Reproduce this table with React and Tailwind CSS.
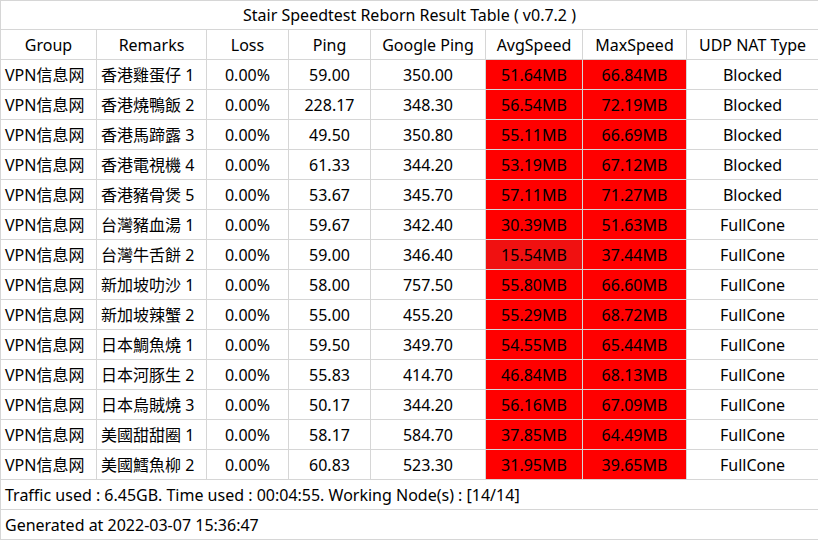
import React from 'react';

const rows = [
  ['VPN信息网', '香港雞蛋仔 1', '0.00%', '59.00', '350.00', '51.64MB', '66.84MB', 'Blocked'],
  ['VPN信息网', '香港燒鴨飯 2', '0.00%', '228.17', '348.30', '56.54MB', '72.19MB', 'Blocked'],
  ['VPN信息网', '香港馬蹄露 3', '0.00%', '49.50', '350.80', '55.11MB', '66.69MB', 'Blocked'],
  ['VPN信息网', '香港電視機 4', '0.00%', '61.33', '344.20', '53.19MB', '67.12MB', 'Blocked'],
  ['VPN信息网', '香港豬骨煲 5', '0.00%', '53.67', '345.70', '57.11MB', '71.27MB', 'Blocked'],
  ['VPN信息网', '台灣豬血湯 1', '0.00%', '59.67', '342.40', '30.39MB', '51.63MB', 'FullCone'],
  ['VPN信息网', '台灣牛舌餅 2', '0.00%', '59.00', '346.40', '15.54MB', '37.44MB', 'FullCone'],
  ['VPN信息网', '新加坡叻沙 1', '0.00%', '58.00', '757.50', '55.80MB', '66.60MB', 'FullCone'],
  ['VPN信息网', '新加坡辣蟹 2', '0.00%', '55.00', '455.20', '55.29MB', '68.72MB', 'FullCone'],
  ['VPN信息网', '日本鯛魚燒 1', '0.00%', '59.50', '349.70', '54.55MB', '65.44MB', 'FullCone'],
  ['VPN信息网', '日本河豚生 2', '0.00%', '55.83', '414.70', '46.84MB', '68.13MB', 'FullCone'],
  ['VPN信息网', '日本烏賊燒 3', '0.00%', '50.17', '344.20', '56.16MB', '67.09MB', 'FullCone'],
  ['VPN信息网', '美國甜甜圈 1', '0.00%', '58.17', '584.70', '37.85MB', '64.49MB', 'FullCone'],
  ['VPN信息网', '美國鱈魚柳 2', '0.00%', '60.83', '523.30', '31.95MB', '39.65MB', 'FullCone'],
];

const headers = ['Group', 'Remarks', 'Loss', 'Ping', 'Google Ping', 'AvgSpeed', 'MaxSpeed', 'UDP NAT Type'];
const widths = ['w-[96px]', 'w-[110px]', 'w-[82px]', 'w-[82px]', 'w-[115px]', 'w-[97px]', 'w-[104px]', 'w-[132px]'];

const cell = 'border border-[#d6d6d6] p-0 whitespace-nowrap';

const App = () => {
  return (
    <div className="bg-white text-black text-[16px] leading-none" style={{ fontFamily: '"Noto Sans", "Noto Sans CJK SC", sans-serif' }}>
      <table className="w-[818px] table-fixed border-collapse">
        <colgroup>
          {widths.map((w, i) => (
            <col key={i} className={w} />
          ))}
        </colgroup>
        <tbody>
          <tr className="h-[29px]">
            <td colSpan={8} className={`${cell} text-center`}>
              Stair Speedtest Reborn Result Table ( v0.7.2 )
            </td>
          </tr>
          <tr className="h-[30px]">
            {headers.map((h) => (
              <td key={h} className={`${cell} text-center`}>{h}</td>
            ))}
          </tr>
          {rows.map((r, i) => (
            <tr key={i} className="h-[30px]">
              {r.map((v, j) => {
                let cls = 'text-center';
                if (j < 2) cls = 'text-left pl-[4px]';
                if (j === 5 || j === 6) {
                  cls += v === '15.54MB' ? ' bg-[#f01111]' : ' bg-[#ff0000]';
                }
                return (
                  <td key={j} className={`${cell} ${cls}`}>{v}</td>
                );
              })}
            </tr>
          ))}
          <tr className="h-[30px]">
            <td colSpan={8} className={`${cell} text-left pl-[4px]`}>
              Traffic used : 6.45GB. Time used : 00:04:55. Working Node(s) : [14/14]
            </td>
          </tr>
          <tr className="h-[30px]">
            <td colSpan={8} className={`${cell} text-left pl-[4px]`}>
              Generated at 2022-03-07 15:36:47
            </td>
          </tr>
        </tbody>
      </table>
    </div>
  );
};

export default App;
